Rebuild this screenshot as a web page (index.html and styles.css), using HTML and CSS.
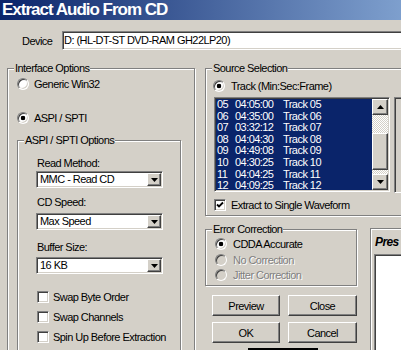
FILE: index.html
```html
<!DOCTYPE html>
<html lang="en">

<head>
  <meta charset="UTF-8" />
  <title>Extract Audio From CD</title>
  <link rel="stylesheet" href="styles.css">
</head>

<body>

  <div class="dialog">
    <div class="titlebar">Extract Audio From CD</div>

    <div class="device-row">
      <span class="device-label">Device</span>
      <div class="field device-field">D: (HL-DT-ST DVD-RAM GH22LP20)</div>
    </div>

    <div class="main">
      <div class="group interface-group">
        <div class="group-title">Interface Options</div>
        <div class="opt generic-row"><span class="radio"></span>Generic Win32</div>
        <div class="opt aspi-row"><span class="radio on"></span>ASPI / SPTI</div>

        <div class="group aspi-group">
          <div class="group-title">ASPI / SPTI Options</div>

          <div class="field-label read-label">Read Method:</div>
          <div class="field combo combo-read">
            <span class="combo-text">MMC - Read CD</span>
            <span class="raised combo-btn"><svg width="7" height="4" viewBox="0 0 7 4"><path d="M0 0h7L3.5 4z" /></svg></span>
          </div>

          <div class="field-label speed-label">CD Speed:</div>
          <div class="field combo combo-speed">
            <span class="combo-text">Max Speed</span>
            <span class="raised combo-btn"><svg width="7" height="4" viewBox="0 0 7 4"><path d="M0 0h7L3.5 4z" /></svg></span>
          </div>

          <div class="field-label buffer-label">Buffer Size:</div>
          <div class="field combo combo-buffer">
            <span class="combo-text">16 KB</span>
            <span class="raised combo-btn"><svg width="7" height="4" viewBox="0 0 7 4"><path d="M0 0h7L3.5 4z" /></svg></span>
          </div>

          <div class="opt check-row first-check"><span class="check"></span>Swap Byte Order</div>
          <div class="opt check-row"><span class="check"></span>Swap Channels</div>
          <div class="opt check-row"><span class="check"></span>Spin Up Before Extraction</div>
        </div>
      </div>

      <div class="col-right">
        <div class="group source-group">
          <div class="group-title">Source Selection</div>
          <div class="opt track-row"><span class="radio on"></span>Track (Min:Sec:Frame)</div>

          <div class="list-row">
            <div class="listbox">
              <div class="list-items">
                <div class="item"><span class="num">05</span><span class="time">04:05:00</span>Track 05</div>
                <div class="item"><span class="num">06</span><span class="time">04:35:00</span>Track 06</div>
                <div class="item"><span class="num">07</span><span class="time">03:32:12</span>Track 07</div>
                <div class="item"><span class="num">08</span><span class="time">04:04:30</span>Track 08</div>
                <div class="item"><span class="num">09</span><span class="time">04:49:08</span>Track 09</div>
                <div class="item"><span class="num">10</span><span class="time">04:30:25</span>Track 10</div>
                <div class="item"><span class="num">11</span><span class="time">04:04:25</span>Track 11</div>
                <div class="item"><span class="num">12</span><span class="time">04:09:25</span>Track 12</div>
              </div>
              <div class="scrollbar">
                <div class="raised sb-btn"><svg width="7" height="4" viewBox="0 0 7 4"><path d="M0 4h7L3.5 0z" /></svg></div>
                <div class="sb-track"><div class="raised sb-thumb"></div></div>
                <div class="raised sb-btn"><svg width="7" height="4" viewBox="0 0 7 4"><path d="M0 0h7L3.5 4z" /></svg></div>
              </div>
            </div>
            <div class="side-panel"></div>
          </div>

          <div class="opt waveform-row">
            <span class="check"><svg width="8" height="8" viewBox="0 0 8 8"><path d="M1 3.5l2 2 4-4" fill="none" stroke="#000" stroke-width="1.8" /></svg></span>Extract to Single Waveform
          </div>
        </div>

        <div class="lower">
          <div class="lower-left">
            <div class="group error-group">
              <div class="group-title">Error Correction</div>
              <div class="opt error-row cdda-row"><span class="radio on"></span>CDDA Accurate</div>
              <div class="opt error-row disabled nocorr-row"><span class="radio"></span>No Correction</div>
              <div class="opt error-row disabled jitter-row"><span class="radio"></span>Jitter Correction</div>
            </div>

            <div class="buttons">
              <div class="raised btn">Preview</div>
              <div class="raised btn">Close</div>
              <div class="raised btn">OK</div>
              <div class="raised btn">Cancel</div>
            </div>
            <div class="focus-bar"></div>
          </div>

          <div class="preset-panel">
            <div class="preset-head">Pres</div>
            <div class="preset-list"></div>
          </div>
        </div>
      </div>
    </div>
  </div>

</body>

</html>
```

FILE: styles.css
```css
* {
  box-sizing: border-box;
}

html,
body {
  margin: 0;
  padding: 0;
  background: #d4d0c8;
}

.dialog {
  width: 401px;
  height: 350px;
  overflow: hidden;
  background: #d4d0c8;
  font-family: "Liberation Sans", Arial, sans-serif;
  font-size: 11px;
  letter-spacing: -0.55px;
  color: #000;
}

/* title bar */
.titlebar {
  height: 20px;
  line-height: 20px;
  padding-left: 2px;
  color: #fff;
  font-size: 17px;
  font-weight: bold;
  letter-spacing: -1px;
  white-space: nowrap;
  background: linear-gradient(90deg, #0a246a 0, #a6caf0 540px);
}

/* 3d bits */
.field {
  background: #fff;
  border: 1px solid;
  border-color: #808080 #fff #fff #808080;
  box-shadow: inset 1px 1px #404040, inset -1px -1px #d4d0c8;
}

.raised {
  background: #d4d0c8;
  border: 1px solid;
  border-color: #fff #404040 #404040 #fff;
  box-shadow: inset -1px -1px #808080, inset 1px 1px #d4d0c8;
}

.group {
  border: 1px solid #808080;
  box-shadow: inset 1px 1px #fff, 1px 1px #fff;
}

.group-title {
  width: max-content;
  height: 12px;
  line-height: 12px;
  margin: -7px 0 0 6px;
  padding: 0 1px;
  background: #d4d0c8;
}

.opt {
  display: flex;
  align-items: center;
  height: 14px;
  white-space: nowrap;
}

.radio {
  flex: none;
  width: 12px;
  height: 12px;
  margin-right: 5px;
  border-radius: 50%;
  background: #fff;
  border: 1px solid;
  border-color: #808080 #fff #fff #808080;
  box-shadow: inset 1px 1px #404040, inset -1px -1px #d4d0c8;
}

.radio.on {
  background: radial-gradient(circle, #000 0 2px, #fff 2.6px);
}

.check {
  flex: none;
  display: flex;
  align-items: center;
  justify-content: center;
  width: 12px;
  height: 12px;
  margin-right: 4px;
  background: #fff;
  border: 1px solid;
  border-color: #808080 #fff #fff #808080;
  box-shadow: inset 1px 1px #404040, inset -1px -1px #d4d0c8;
}

.disabled {
  color: #808080;
  text-shadow: 1px 1px #fff;
}

.disabled .radio {
  background: #d4d0c8;
}

/* device */
.device-row {
  display: flex;
  align-items: center;
  height: 19px;
  margin-top: 11px;
}

.device-label {
  flex: none;
  width: 62px;
  padding-left: 22px;
}

.device-field {
  flex: none;
  width: 360px;
  height: 19px;
  padding-left: 1px;
  line-height: 17px;
  white-space: nowrap;
}

.main {
  display: flex;
  align-items: flex-start;
  margin-top: 18px;
}

/* left column */
.interface-group {
  flex: none;
  width: 188px;
  height: 300px;
  margin-left: 7px;
}

.generic-row {
  margin-top: 3px;
  padding-left: 9px;
}

.aspi-row {
  margin-top: 20px;
  padding-left: 9px;
}

.aspi-group {
  width: 164px;
  height: 250px;
  margin: 15px 0 0 9px;
}

.field-label {
  height: 12px;
  line-height: 12px;
  margin-left: 19px;
}

.read-label {
  margin-top: 11px;
}

.speed-label {
  margin-top: 8px;
}

.buffer-label {
  margin-top: 11px;
}

.combo {
  display: flex;
  width: 127px;
  height: 17px;
  margin-left: 18px;
}

.combo-read {
  margin-top: 2px;
}

.combo-speed {
  margin-top: 5px;
}

.combo-buffer {
  margin-top: 4px;
}

.combo-text {
  flex: 1;
  padding-left: 3px;
  line-height: 15px;
  white-space: nowrap;
}

.combo-btn {
  flex: none;
  display: flex;
  align-items: center;
  justify-content: center;
  width: 14px;
  margin: 1px 1px 1px 0;
}

.check-row {
  margin-top: 6px;
  padding-left: 19px;
}

.first-check {
  margin-top: 16px;
}

/* right column */
.col-right {
  flex: none;
  width: 220px;
  margin-left: 10px;
  display: flex;
  flex-direction: column;
}

.source-group {
  width: 220px;
  height: 148px;
}

.track-row {
  margin-top: 5px;
  padding-left: 7px;
}

.track-row .radio {
  margin-right: 6px;
}

.list-row {
  display: flex;
  margin: 4px 0 0 8px;
}

.listbox {
  flex: none;
  display: flex;
  width: 176px;
  height: 95px;
  padding: 1px;
  background: #0a246a;
  border: 1px solid;
  border-color: #808080 #fff #fff #808080;
  box-shadow: inset 1px 1px #404040, inset -1px -1px #d4d0c8;
}

.list-items {
  flex: 1;
  padding-left: 1px;
  color: #fff;
  overflow: hidden;
}

.item {
  display: flex;
  height: 11.6px;
  line-height: 11.6px;
  white-space: nowrap;
}

.num {
  width: 18px;
}

.time {
  width: 48px;
}

.scrollbar {
  flex: none;
  width: 16px;
  display: flex;
  flex-direction: column;
}

.sb-btn {
  flex: none;
  height: 16px;
  display: flex;
  align-items: center;
  justify-content: center;
}

.sb-track {
  flex: 1;
  background: repeating-conic-gradient(#d4d0c8 0 25%, #fff 0 50%) 0 0 / 2px 2px;
}

.sb-thumb {
  height: 37px;
  margin-top: 18px;
}

.side-panel {
  flex: none;
  width: 40px;
  height: 96px;
  margin-left: 4px;
  border: 1px solid;
  border-color: #808080 #fff #fff #808080;
  box-shadow: inset 1px 1px #404040;
}

.waveform-row {
  margin-top: 5px;
  padding-left: 8px;
}

.waveform-row .check {
  margin-right: 5px;
}

.lower {
  display: flex;
  align-items: flex-start;
  margin-top: 13px;
}

.lower-left {
  flex: none;
  width: 152px;
}

.error-group {
  width: 152px;
  height: 57px;
}

.error-row {
  padding-left: 9px;
}

.error-row .radio {
  margin-right: 6px;
}

.cdda-row {
  margin-top: 2px;
}

.nocorr-row {
  margin-top: 2px;
}

.jitter-row {
  margin-top: 1px;
}

.buttons {
  display: grid;
  grid-template-columns: 68px 69px;
  grid-auto-rows: 21px;
  column-gap: 8px;
  row-gap: 6px;
  margin: 9px 0 0 7px;
}

.btn {
  display: flex;
  align-items: center;
  justify-content: center;
}

.focus-bar {
  width: 70px;
  height: 3px;
  margin: 5px 0 0 43px;
  background: #000;
}

.preset-panel {
  flex: none;
  width: 31px;
  height: 130px;
  margin: -1px 0 0 13px;
  padding: 2px 0 0 3px;
  border: 1px solid;
  border-color: #808080 #fff #fff #808080;
  border-right: 0;
  box-shadow: inset 1px 1px #fff;
}

.preset-head {
  height: 23px;
  line-height: 23px;
  padding-left: 1px;
  font-size: 12px;
  font-weight: bold;
  font-style: italic;
  letter-spacing: -0.6px;
  white-space: nowrap;
}

.preset-list {
  height: 120px;
  background: #fff;
  border: 1px solid #808080;
  border-right: 0;
  box-shadow: inset 1px 1px #404040;
}
```
